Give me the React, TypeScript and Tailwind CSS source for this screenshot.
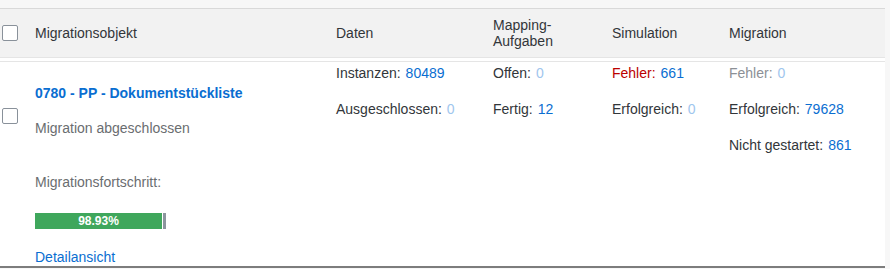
import type { ReactNode } from 'react'

const font = { fontFamily: '"Liberation Sans", Arial, sans-serif' }

function Checkbox({ className = '' }: { className?: string }) {
  return (
    <div
      className={`h-4 w-4 rounded-[2px] border border-[#89919a] bg-white ${className}`}
    />
  )
}

function Stat({
  label,
  value,
  labelClass = 'text-[#32363a]',
  muted = false,
}: {
  label: string
  value: ReactNode
  labelClass?: string
  muted?: boolean
}) {
  return (
    <div className="flex items-baseline gap-[5px] leading-[20px]">
      <span className={labelClass}>{label}</span>
      <span className={muted ? 'text-[#9fc6ee]' : 'text-[#0a6ed1]'}>{value}</span>
    </div>
  )
}

export default function App() {
  return (
    <div className="h-[269px] w-[890px] overflow-hidden bg-[#f7f7f7] pt-[8px] text-[14px]" style={font}>
      <div className="w-[885px] bg-white">
        {/* header */}
        <div className="grid h-[50px] grid-cols-[25px_301px_157px_119px_117px_1fr] items-center border-t border-b border-t-[#d9d9d9] border-b-[#e5e5e5] bg-[#f2f2f2] text-[#32363a]">
          <div className="pl-[2px]">
            <Checkbox />
          </div>
          <div className="pl-[10px]">Migrationsobjekt</div>
          <div className="pl-[10px]">Daten</div>
          <div className="pl-[10px] leading-[16px]">
            Mapping-
            <br />
            Aufgaben
          </div>
          <div className="pl-[10px]">Simulation</div>
          <div className="pl-[10px]">Migration</div>
        </div>
        <div className="mt-[3px] border-t border-[#e5e5e5]" />

        {/* row */}
        <div className="grid h-[206px] grid-cols-[25px_301px_157px_119px_117px_1fr] border-b-2 border-[#7d7d7d]">
          <div className="pl-[2px] pt-[46px]">
            <Checkbox />
          </div>
          <div className="flex flex-col pl-[10px] pt-[21px]">
            <a className="font-bold leading-[20px] text-[#0a6ed1]">0780 - PP - Dokumentstückliste</a>
            <div className="mt-[15px] leading-[20px] text-[#6a6d70]">Migration abgeschlossen</div>
            <div className="mt-[34px] leading-[20px] text-[#6a6d70]">Migrationsfortschritt:</div>
            <div className="mt-[21px] flex h-[16px] w-[131px]">
              <div className="flex w-[127px] items-center justify-center bg-[#3fa75c] text-[12px] font-bold text-white">
                98.93%
              </div>
              <div className="w-px bg-white" />
              <div className="flex-1 bg-[#8c959e]" />
            </div>
            <a className="mt-[18px] leading-[20px] text-[#0a6ed1]">Detailansicht</a>
          </div>
          <div className="flex flex-col gap-[16px] pl-[10px] pt-[1px]">
            <Stat label="Instanzen:" value="80489" />
            <Stat label="Ausgeschlossen:" value="0" muted />
          </div>
          <div className="flex flex-col gap-[16px] pl-[10px] pt-[1px]">
            <Stat label="Offen:" value="0" muted />
            <Stat label="Fertig:" value="12" />
          </div>
          <div className="flex flex-col gap-[16px] pl-[10px] pt-[1px]">
            <Stat label="Fehler:" value="661" labelClass="text-[#bb0000]" />
            <Stat label="Erfolgreich:" value="0" muted />
          </div>
          <div className="flex flex-col gap-[16px] pl-[10px] pt-[1px]">
            <Stat label="Fehler:" value="0" labelClass="text-[#8c9096]" muted />
            <Stat label="Erfolgreich:" value="79628" />
            <Stat label="Nicht gestartet:" value="861" />
          </div>
        </div>
      </div>
    </div>
  )
}
